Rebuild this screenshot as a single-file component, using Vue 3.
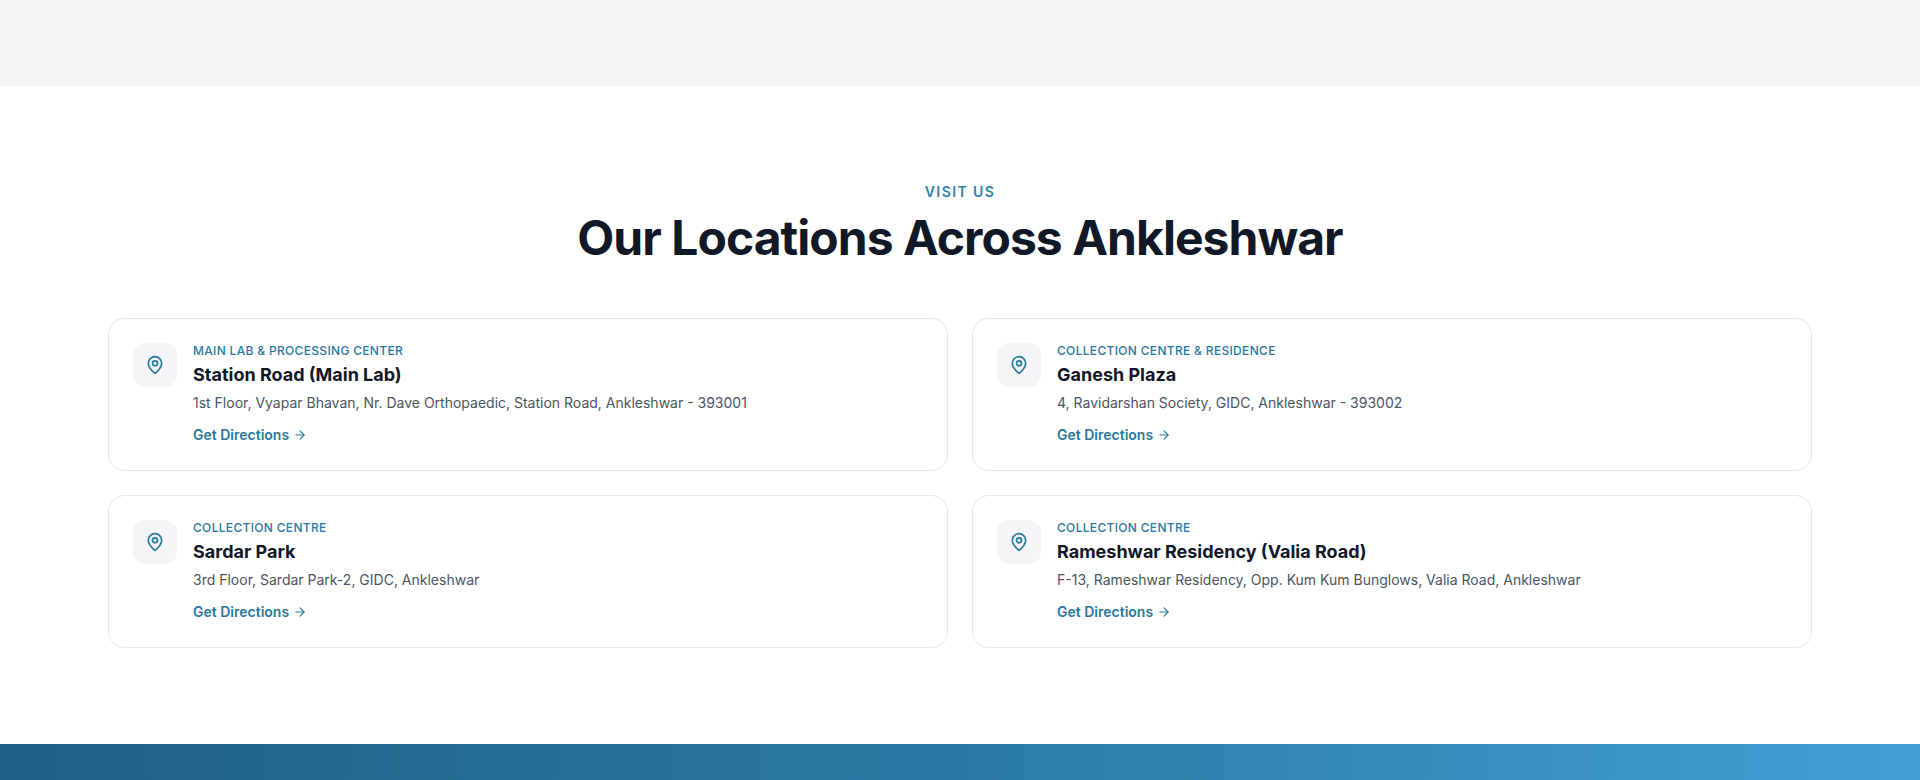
<script setup>
const locations = [
  { type: 'MAIN LAB & PROCESSING CENTER', name: 'Station Road (Main Lab)', address: '1st Floor, Vyapar Bhavan, Nr. Dave Orthopaedic, Station Road, Ankleshwar - 393001' },
  { type: 'COLLECTION CENTRE & RESIDENCE', name: 'Ganesh Plaza', address: '4, Ravidarshan Society, GIDC, Ankleshwar - 393002' },
  { type: 'COLLECTION CENTRE', name: 'Sardar Park', address: '3rd Floor, Sardar Park-2, GIDC, Ankleshwar' },
  { type: 'COLLECTION CENTRE', name: 'Rameshwar Residency (Valia Road)', address: 'F-13, Rameshwar Residency, Opp. Kum Kum Bunglows, Valia Road, Ankleshwar' }
]
</script>

<template>
  <div class="page">
    <div class="band"></div>
    <section class="locations">
      <header class="head">
        <p class="eyebrow">VISIT US</p>
        <h2 class="title">Our Locations Across Ankleshwar</h2>
      </header>
      <div class="grid">
        <article v-for="loc in locations" :key="loc.name" class="card">
          <div class="icon">
            <svg width="20" height="20" viewBox="0 0 24 24" fill="none" stroke="currentColor" stroke-width="2" stroke-linecap="round" stroke-linejoin="round">
              <path d="M20 10c0 4.993-5.539 10.193-7.399 11.799a1 1 0 0 1-1.202 0C9.539 20.193 4 14.993 4 10a8 8 0 0 1 16 0" />
              <circle cx="12" cy="10" r="3" />
            </svg>
          </div>
          <div class="body">
            <p class="type">{{ loc.type }}</p>
            <h3 class="name">{{ loc.name }}</h3>
            <p class="address">{{ loc.address }}</p>
            <a class="link" href="#">
              Get Directions
              <svg width="14" height="14" viewBox="0 0 24 24" fill="none" stroke="currentColor" stroke-width="2" stroke-linecap="round" stroke-linejoin="round">
                <path d="M5 12h14" />
                <path d="m12 5 7 7-7 7" />
              </svg>
            </a>
          </div>
        </article>
      </div>
    </section>
    <div class="cta"></div>
  </div>
</template>

<style>
html, body { margin: 0; background: #fff; overflow: hidden; }
</style>

<style scoped>
.page { font-family: Inter, "Liberation Sans", sans-serif; height: 780px; overflow: hidden; display: flex; flex-direction: column; }
.band { height: 86px; background: #f3f4f6; flex: none; }
.locations { padding: 96px 108px; flex: none; height: 658px; box-sizing: border-box; }
.head { text-align: center; margin-bottom: 50px; }
.eyebrow { margin: 0 0 6px; font-size: 14px; line-height: 20px; font-weight: 600; letter-spacing: 1.4px; color: #2f7fa8; }
.title { margin: 0; font-size: 48px; line-height: 60px; font-weight: 700; letter-spacing: -0.96px; color: #111827; }
.grid { display: grid; grid-template-columns: 1fr 1fr; gap: 24px; }
.card { display: flex; gap: 16px; padding: 24px; border: 1px solid #e5e7eb; border-radius: 16px; background: #fff; }
.icon { width: 44px; height: 44px; border-radius: 12px; background: #f3f5f7; color: #2a789f; display: flex; align-items: center; justify-content: center; flex: none; }
.body { min-width: 0; }
.type { margin: 0 0 2px; font-size: 12px; line-height: 16px; font-weight: 500; letter-spacing: 0.32px; color: #2a789f; }
.name { margin: 0 0 4px; font-size: 18px; line-height: 28px; font-weight: 700; color: #111827; }
.address { margin: 0 0 11px; font-size: 14px; line-height: 20px; color: #4b5563; }
.link { display: inline-flex; align-items: center; gap: 4px; margin-bottom: 1px; font-size: 14px; line-height: 20px; font-weight: 600; color: #2a789f; text-decoration: none; }
.cta { height: 36px; flex: none; background: linear-gradient(to right, #215f85, #2a7aa3 50%, #42a0d6); }
</style>
